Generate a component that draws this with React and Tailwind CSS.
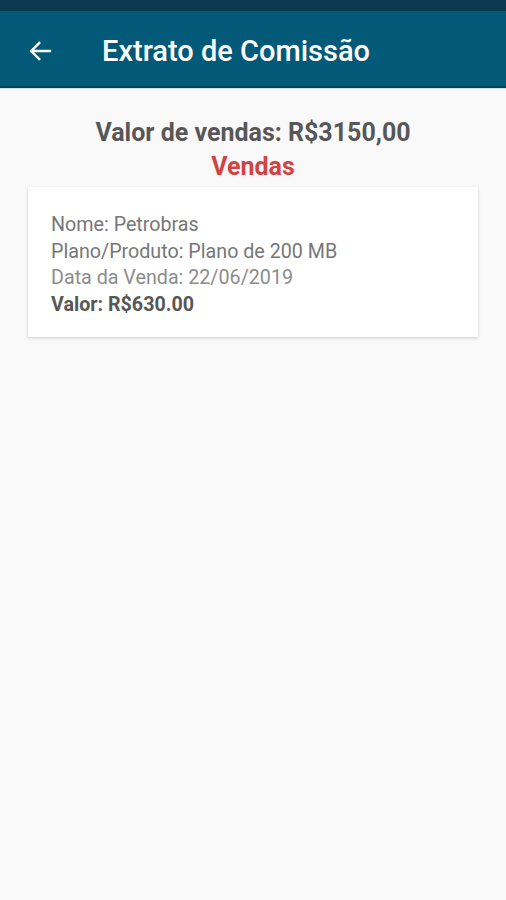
import React from 'react';

export default function App() {
  return (
    <div
      className="min-h-[900px] w-full bg-[#f9f9f9]"
      style={{ fontFamily: 'Roboto, "Liberation Sans", sans-serif' }}
    >
      {/* status bar */}
      <div className="h-[11px] bg-[#0c3a4e]" />

      {/* app bar */}
      <div className="flex h-[77px] items-center bg-[#025a78] pt-[5px] border-b-2 border-[#00435c]">
        <button className="ml-[26px] flex h-[28px] w-[28px] items-center justify-center text-white">
          <svg width="28" height="28" viewBox="0 0 24 24" fill="none">
            <path
              d="M20.5 12H4.5M11.3 5.2 4.5 12l6.8 6.8"
              stroke="currentColor"
              strokeWidth="2.1"
              strokeLinecap="square"
            />
          </svg>
        </button>
        <h1 className="ml-[48px] text-[29px] font-medium leading-none text-white">
          Extrato de Comissão
        </h1>
      </div>
      <div className="h-px bg-[#cfe3ec]" />

      <main className="pt-[27px]">
        <p className="text-center text-[25px] font-bold leading-[34px] text-[#575757]">
          Valor de vendas: R$3150,00
        </p>
        <p className="text-center text-[25px] font-bold leading-[34px] text-[#d24343]">
          Vendas
        </p>

        <div className="mx-[28px] mt-[3px] bg-white pl-[23px] pr-4 pt-[25px] pb-[19px] shadow-[0_1px_3px_rgba(0,0,0,0.18)]">
          <p className="text-[19.7px] leading-[26.5px] text-[#777777]">Nome: Petrobras</p>
          <p className="text-[19.7px] leading-[26.5px] text-[#777777]">
            Plano/Produto: Plano de 200 MB
          </p>
          <p className="text-[19.7px] leading-[26.5px] text-[#8c8c8c]">
            Data da Venda: 22/06/2019
          </p>
          <p className="text-[19.7px] font-bold leading-[26.5px] text-[#575757]">
            Valor: R$630.00
          </p>
        </div>
      </main>
    </div>
  );
}
